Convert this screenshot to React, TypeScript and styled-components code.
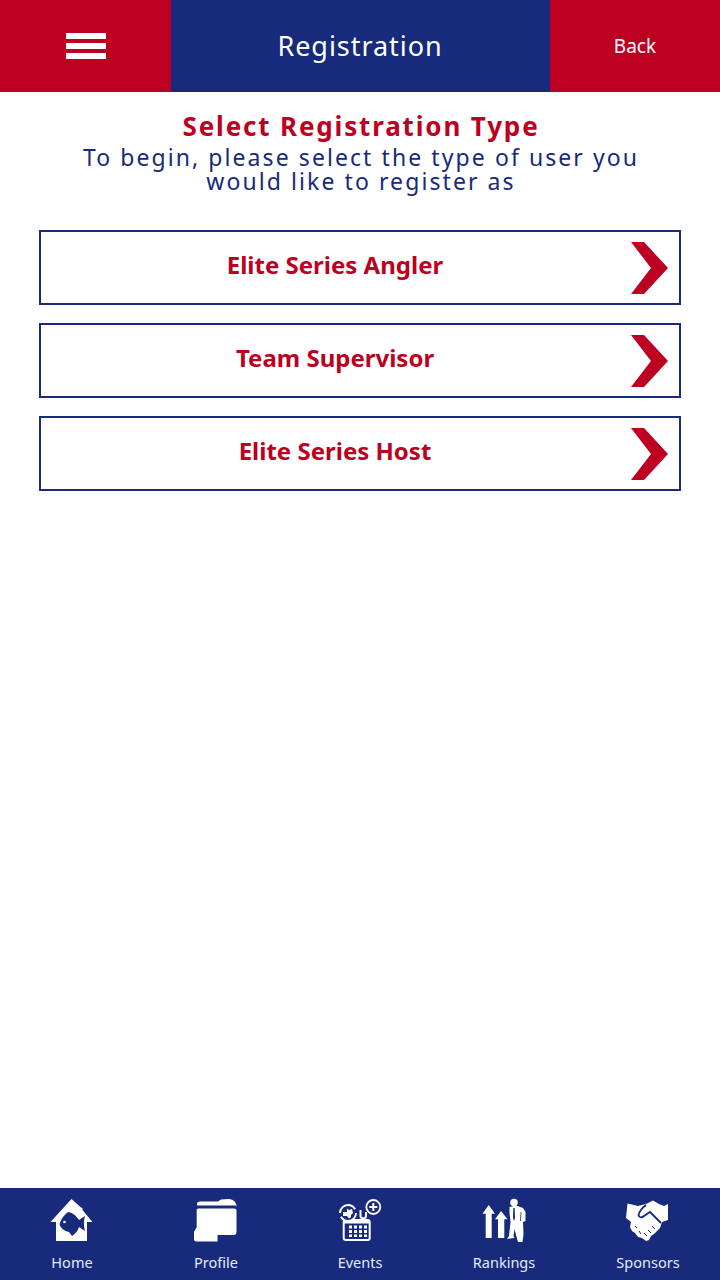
import React from "react";
import styled, { createGlobalStyle } from "styled-components";

const Global = createGlobalStyle`
  html, body { margin: 0; padding: 0; background: #fff; }
  * { box-sizing: border-box; }
`;
const font = `"Noto Sans", "Open Sans", sans-serif`;
const navy = "#172a7b";
const red = "#bd0021";

const Page = styled.div`
  width: 720px; height: 1280px; display: flex; flex-direction: column;
  font-family: ${font}; background: #fff;
`;
const Header = styled.header`
  height: 92px; display: grid; grid-template-columns: 171px 379px 170px;
`;
const MenuCell = styled.div`
  background: ${red}; display: flex; align-items: center; justify-content: center;
`;
const Burger = styled.div`
  width: 40px; height: 26px; display: flex; flex-direction: column; justify-content: space-between;
  span { display: block; height: 6px; background: #fff; }
`;
const TitleCell = styled.div`
  background: ${navy}; color: #fff; display: flex; align-items: center; justify-content: center;
  font-size: 27px; letter-spacing: 0.95px; padding-bottom: 2px; padding-right: 1px;
`;
const BackCell = styled.div`
  background: ${red}; color: #fff; display: flex; align-items: center; justify-content: center;
  font-size: 19px;
`;
const Main = styled.main`
  flex: 1; padding: 18px 39px 0; display: flex; flex-direction: column;
`;
const Heading = styled.h1`
  margin: 0; height: 35px; text-align: center; color: ${red}; font-size: 26px; font-weight: 700;
  line-height: 32px; letter-spacing: 1.85px; padding-left: 2px;
`;
const Sub = styled.p`
  margin: 0 auto 37px; width: 620px; text-align: center; color: ${navy}; font-size: 23px;
  line-height: 24px; letter-spacing: 2.08px; padding-left: 2px;
`;
const Options = styled.div`
  display: flex; flex-direction: column; gap: 18px;
`;
const Option = styled.div`
  height: 75px; border: 2px solid ${navy}; display: flex; align-items: center;
  padding-right: 10px;
`;
const OptionLabel = styled.div`
  flex: 1; text-align: center; color: ${red}; font-size: 24px; font-weight: 700;
  padding-bottom: 7px;
`;
const Nav = styled.nav`
  height: 92px; background: ${navy}; display: grid; grid-template-columns: repeat(5, 144px);
`;
const NavItem = styled.div`
  display: flex; flex-direction: column; align-items: center; color: #e6ebfb;
  padding-top: 10px; font-size: 14.5px; line-height: 20px;
`;
const IconBox = styled.div`
  width: 48px; height: 46px; margin-bottom: 8px; color: #fff;
  svg { display: block; }
`;

const Chevron = () => (
  <svg width="40" height="54" viewBox="0 0 40 54"><path d="M2 1h13l24 26-24 26H2l20-26z" fill={red} /></svg>
);

const HomeIcon = () => (
  <svg width="48" height="46" viewBox="0 0 48 46">
    <path fill="#fff" d="M23.500 1 33 9.500 34.500 10V12L44.500 24H39V43H8V24H2.500z" />
    <path fill={navy} d="M20 14C26 15 29 19 31 22L37 18C35.500 23 35.500 28 37 33L31 29C30 33 27 36 24 38L21 34C16 33 12.500 30 11.500 26 13 21 16 17 20 14z" />
    <circle cx="16.500" cy="24" r="1.300" fill="#fff" />
  </svg>
);
const ProfileIcon = () => (
  <svg width="48" height="46" viewBox="0 0 48 46">
    <path fill="#fff" d="M5 6C5 4.500 6 3.500 8 3.500H26L29 1.500 36 1C40 1 43.500 3 44.500 7V9H5z" />
    <path fill={navy} d="M5 7.500H44.500V10H5z" />
    <path fill="#fff" d="M7 10.500H42C44 10.500 44.500 11.500 44.500 13V34C44.500 36 43.500 37 42 37H25.500V43.500H4C2.500 43.500 2 42.500 2 41V34L4.700 29V12C4.700 11 5.500 10.500 7 10.500z" />
  </svg>
);
const EventsIcon = () => (
  <svg width="48" height="46" viewBox="0 0 48 46">
    <path fill="#fff" fillRule="evenodd" d="M10 21H32C33.500 21 34.700 22 34.700 24V40C34.700 42 33.500 43 32 43H10C8 43 6.700 42 6.700 40V24C6.700 22 8 21 10 21zM8.700 25.500V39.500C8.700 40.500 9.300 41 10.500 41H31.500C32.300 41 32.700 40.500 32.700 39.500V25.500z" />
    <path fill="#fff" d="M13 27.500h3v3h-3zM18 27.500h3v3h-3zM23 27.500h3v3h-3zM28 27.500h3v3h-3zM13 32h3v3h-3zM18 32h3v3h-3zM23 32h3v3h-3zM28 32h3v3h-3zM13 36.500h3v2.500h-3zM18 36.500h3v2.500h-3zM23 36.500h3v2.500h-3zM28 36.500h3v2.500h-3z" />
    <path fill="none" stroke="#fff" strokeWidth="2" d="M24.500 12V18C24.500 21 30 21 30 18V14" />
    <circle cx="12" cy="15" r="8" fill={navy} stroke="#fff" strokeWidth="2" strokeDasharray="21 4" />
    <path fill="#fff" d="M7 14h4v-3.500l2 1.500 3-1 1 4-2 2v2l-2 1.500-2-2.500H7z" />
    <circle cx="37.300" cy="9" r="7" fill={navy} stroke="#fff" strokeWidth="1.800" />
    <path stroke="#fff" strokeWidth="2" d="M37.300 5v8M33.300 9h8" />
  </svg>
);
const RankingsIcon = () => (
  <svg width="48" height="46" viewBox="0 0 48 46">
    <path fill="#fff" d="M8.700 7 15 15.700H11.700V40H5.700V15.700H2.500zM21 13 27.500 21.300H24.300V40H18V21.300H15z" />
    <circle cx="34" cy="4.500" r="3.800" fill="#fff" />
    <path fill="#fff" d="M29.500 9 36 7.500 43 10 45.500 14V23L43 24 43.500 36 42.500 44H38L36 37 34.500 31 33.500 38 34.500 40 27 41 29 38 30.500 24 29.500 15z" />
    <path fill={navy} d="M33.300 10H34.700L35 20 34 23 33 20z" />
    <path stroke={navy} strokeWidth="0.800" d="M41 14 40.500 23" />
  </svg>
);
const SponsorsIcon = () => (
  <svg width="48" height="46" viewBox="0 0 48 46">
    <path fill="#fff" d="M3.500 5.500 14 8 22 6 29 2.500 35 6 40 8 44 6V22L38 24 36 30 33 33 30 36 27 38 25 42 22 43 18 40 14 39 11 35 8 33 6 29 7 24 2 20z" />
    <path fill="none" stroke={navy} strokeWidth="1.800" d="M22 7C18 10 15.500 13 14.500 17 15 20 18 20 20 18L26 14 37 25" />
    <path fill="none" stroke={navy} strokeWidth="1" d="M11 28 13 30M15 33 17 36M28 28 31 31M24 32 27 35M20 35 23 38" />
  </svg>
);

const items = [
  { label: "Home", Icon: HomeIcon },
  { label: "Profile", Icon: ProfileIcon },
  { label: "Events", Icon: EventsIcon },
  { label: "Rankings", Icon: RankingsIcon },
  { label: "Sponsors", Icon: SponsorsIcon },
];

export default function App() {
  return (
    <Page>
      <Global />
      <Header>
        <MenuCell><Burger><span /><span /><span /></Burger></MenuCell>
        <TitleCell>Registration</TitleCell>
        <BackCell>Back</BackCell>
      </Header>
      <Main>
        <Heading>Select Registration Type</Heading>
        <Sub>To begin, please select the type of user you would like to register as</Sub>
        <Options>
          {["Elite Series Angler", "Team Supervisor", "Elite Series Host"].map((t) => (
            <Option key={t}>
              <OptionLabel>{t}</OptionLabel>
              <Chevron />
            </Option>
          ))}
        </Options>
      </Main>
      <Nav>
        {items.map(({ label, Icon }) => (
          <NavItem key={label}>
            <IconBox><Icon /></IconBox>
            {label}
          </NavItem>
        ))}
      </Nav>
    </Page>
  );
}
